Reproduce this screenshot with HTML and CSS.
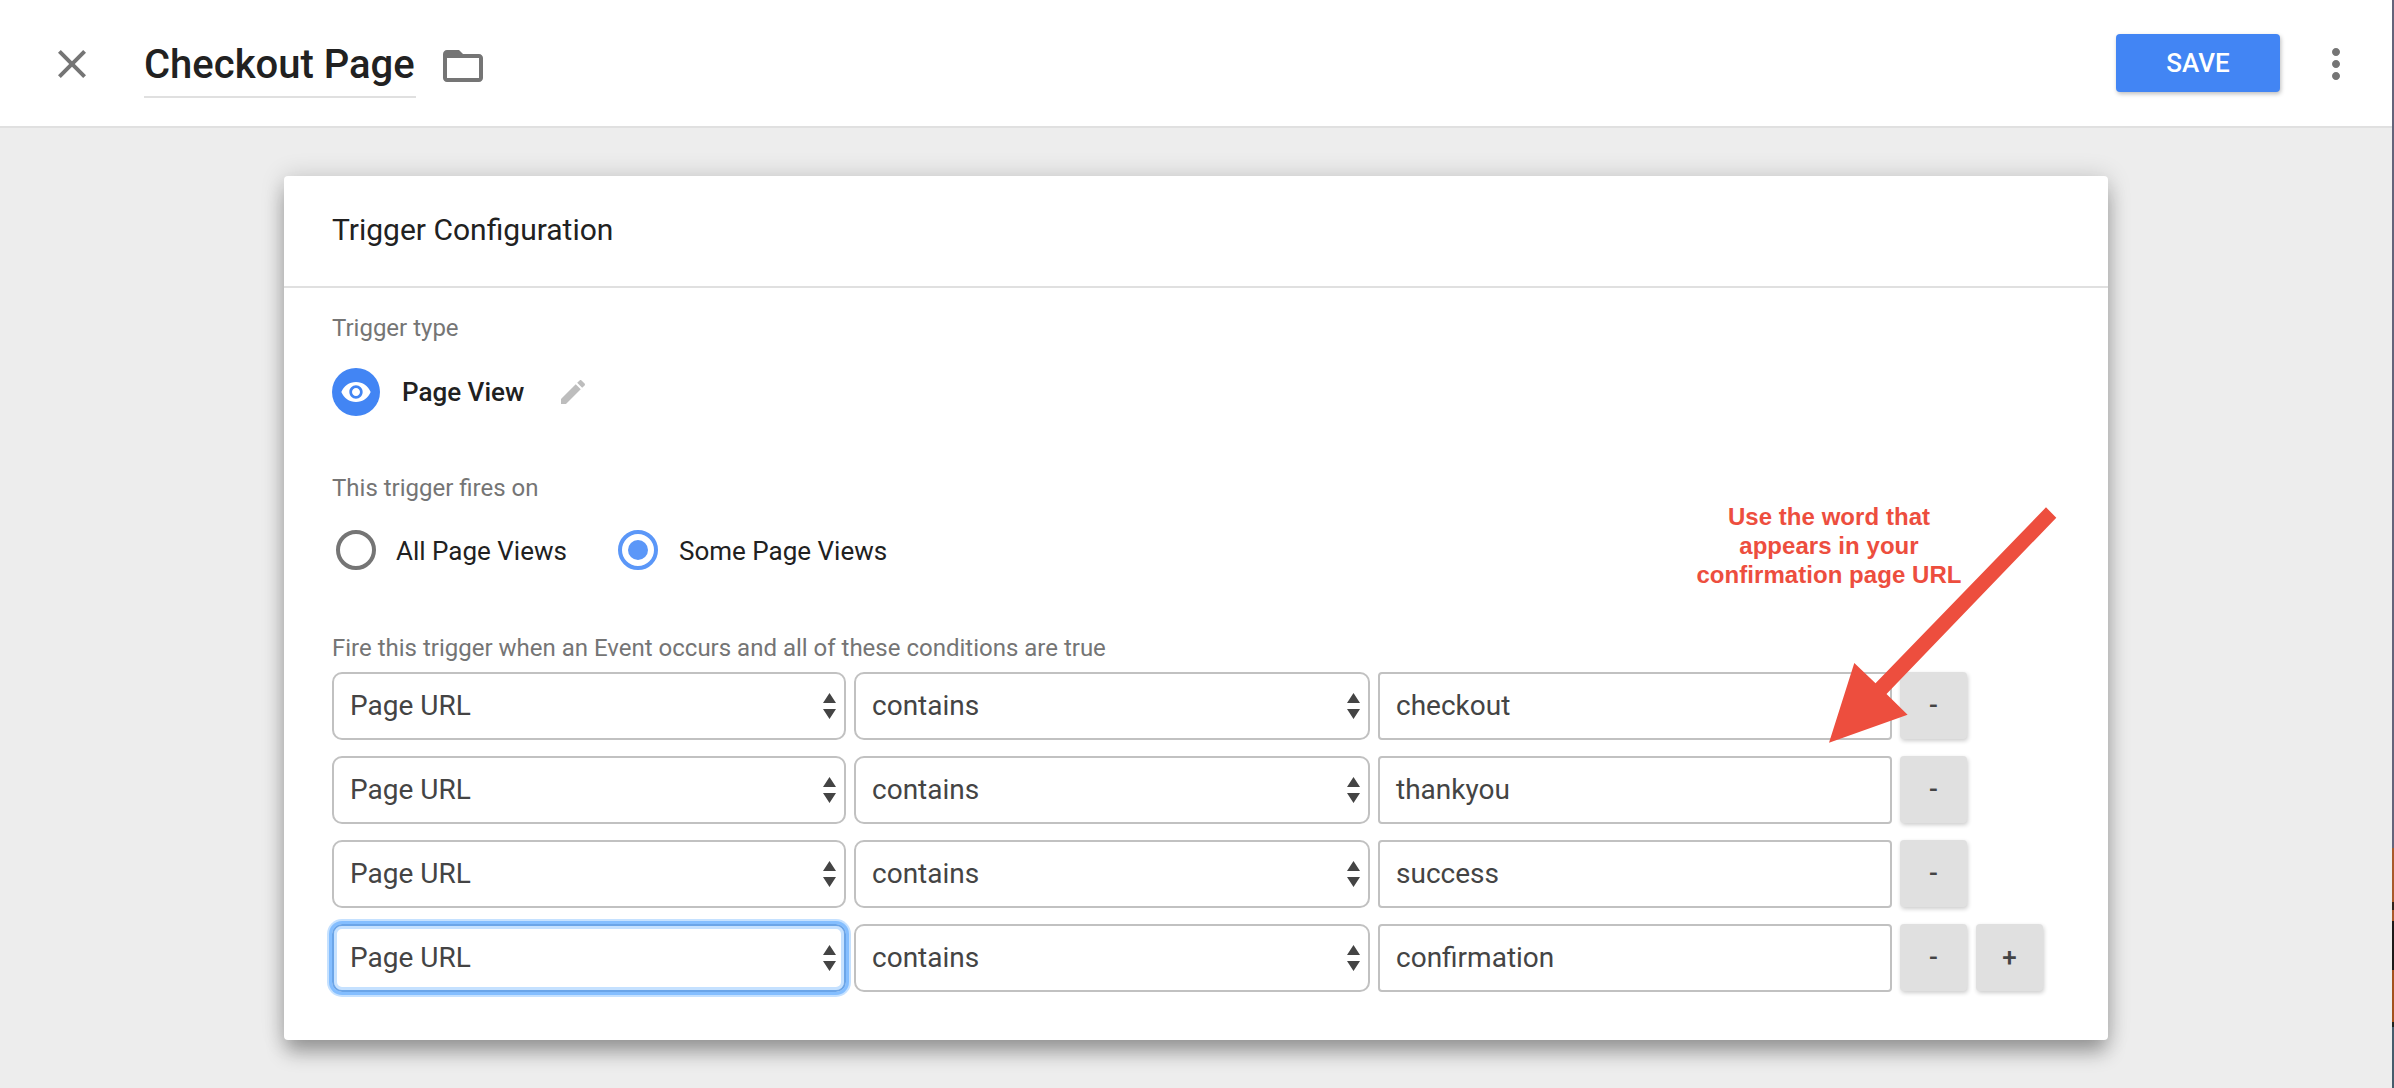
FILE: index.html
```html
<!DOCTYPE html>
<html lang="en">
<head>
<meta charset="utf-8">
<title>Checkout Page</title>
<link rel="stylesheet" href="styles.css">
</head>
<body>
<div class="screen">
  <div class="app">
    <header class="topbar">
      <svg class="icon close" viewBox="0 0 24 24"><path d="M19 6.41 17.59 5 12 10.59 6.41 5 5 6.41 10.59 12 5 17.59 6.41 19 12 13.41 17.59 19 19 17.59 13.41 12z"/></svg>
      <h1 class="title">Checkout Page</h1>
      <svg class="icon folder" viewBox="0 0 24 24"><path d="M20 6h-8l-2-2H4c-1.1 0-1.99.9-1.99 2L2 18c0 1.1.9 2 2 2h16c1.1 0 2-.9 2-2V8c0-1.1-.9-2-2-2zm0 12H4V8h16v10z"/></svg>
      <button class="save">SAVE</button>
      <svg class="icon more" viewBox="0 0 24 24"><path d="M12 8c1.1 0 2-.9 2-2s-.9-2-2-2-2 .9-2 2 .9 2 2 2zm0 2c-1.1 0-2 .9-2 2s.9 2 2 2 2-.9 2-2-.9-2-2-2zm0 6c-1.1 0-2 .9-2 2s.9 2 2 2 2-.9 2-2-.9-2-2-2z"/></svg>
    </header>
    <main class="card">
      <h2 class="card-title">Trigger Configuration</h2>
      <div class="card-body">
        <div class="label">Trigger type</div>
        <div class="type">
          <span class="type-badge"><svg viewBox="0 0 24 24"><path d="M12 4.5C7 4.5 2.73 7.61 1 12c1.73 4.39 6 7.5 11 7.5s9.27-3.11 11-7.5c-1.73-4.39-6-7.5-11-7.5zM12 17c-2.76 0-5-2.24-5-5s2.24-5 5-5 5 2.24 5 5-2.24 5-5 5zm0-8c-1.66 0-3 1.34-3 3s1.34 3 3 3 3-1.34 3-3-1.34-3-3-3z"/></svg></span>
          <span class="type-name">Page View</span>
          <svg class="pencil" viewBox="0 0 24 24"><path d="M3 17.25V21h3.75L17.81 9.94l-3.75-3.75L3 17.25zM20.71 7.04c.39-.39.39-1.02 0-1.41l-2.34-2.34c-.39-.39-1.02-.39-1.41 0l-1.83 1.83 3.75 3.75 1.83-1.83z"/></svg>
        </div>
        <div class="label fires">This trigger fires on</div>
        <div class="radios">
          <span class="radio"></span><span class="radio-text first">All Page Views</span>
          <span class="radio on"></span><span class="radio-text">Some Page Views</span>
        </div>
        <div class="label conditions-label">Fire this trigger when an Event occurs and all of these conditions are true</div>
        <div class="conditions">
          <div class="row">
            <div class="field select">Page URL<svg viewBox="0 0 13 26"><path d="M0 10 6.5 0 13 10zM0 16h13L6.5 26z"/></svg></div>
            <div class="field select">contains<svg viewBox="0 0 13 26"><path d="M0 10 6.5 0 13 10zM0 16h13L6.5 26z"/></svg></div>
            <div class="field">checkout</div>
            <button class="step">-</button>
          </div>
          <div class="row">
            <div class="field select">Page URL<svg viewBox="0 0 13 26"><path d="M0 10 6.5 0 13 10zM0 16h13L6.5 26z"/></svg></div>
            <div class="field select">contains<svg viewBox="0 0 13 26"><path d="M0 10 6.5 0 13 10zM0 16h13L6.5 26z"/></svg></div>
            <div class="field">thankyou</div>
            <button class="step">-</button>
          </div>
          <div class="row">
            <div class="field select">Page URL<svg viewBox="0 0 13 26"><path d="M0 10 6.5 0 13 10zM0 16h13L6.5 26z"/></svg></div>
            <div class="field select">contains<svg viewBox="0 0 13 26"><path d="M0 10 6.5 0 13 10zM0 16h13L6.5 26z"/></svg></div>
            <div class="field">success</div>
            <button class="step">-</button>
          </div>
          <div class="row">
            <div class="field select focused">Page URL<svg viewBox="0 0 13 26"><path d="M0 10 6.5 0 13 10zM0 16h13L6.5 26z"/></svg></div>
            <div class="field select">contains<svg viewBox="0 0 13 26"><path d="M0 10 6.5 0 13 10zM0 16h13L6.5 26z"/></svg></div>
            <div class="field">confirmation</div>
            <button class="step">-</button>
            <button class="step">+</button>
          </div>
        </div>
      </div>
      <div class="note">Use the word that<br>appears in your<br>confirmation page URL</div>
      <svg class="arrow" viewBox="0 0 228 236"><path d="M217 .3 227.3 10.7 57.5 187 78.6 207.7 0 235.7 25.3 156 46.5 176.3z"/></svg>
    </main>
  </div>
  <div class="edge"></div>
</div>
</body>
</html>
```
FILE: styles.css
```css
* { box-sizing: border-box; }
body {
  margin: 0;
  font-family: Roboto, "Liberation Sans", sans-serif;
  color: #212121;
}
.screen {
  display: flex;
  width: 2394px;
  height: 1088px;
  overflow: hidden;
  background: #ededed;
}
.app { flex: 1; }
.edge {
  width: 2px;
  background: linear-gradient(#64647a 0 848px, #a85a2c 848px 902px, #33231c 902px 910px, #a85a2c 910px 921px, #1e1a1a 921px 970px, #a3521f 970px 1022px, #1f2420 1022px 1027px, #465c6c 1027px);
}
.topbar {
  display: flex;
  align-items: flex-start;
  height: 128px;
  padding: 34px 32px 0 48px;
  background: #fff;
  border-bottom: 2px solid #e0e0e0;
}
.icon { width: 48px; height: 48px; fill: #757575; }
.close { margin-top: 6px; }
.title {
  margin: 6px 0 0 48px;
  width: 272px;
  height: 58px;
  font-size: 40px;
  line-height: 50px;
  font-weight: 500;
  white-space: nowrap;
  border-bottom: 2px solid #e0e0e0;
}
.folder { margin: 8px 0 0 23px; }
.save {
  margin-left: auto;
  width: 164px;
  height: 58px;
  padding: 0;
  border: 0;
  border-radius: 4px;
  background: #4285f4;
  box-shadow: 1px 2px 4px rgba(0, 0, 0, .26);
  color: #fff;
  font: 500 26px/58px Roboto, sans-serif;
}
.more { margin: 6px 0 0 32px; }
.card {
  position: relative;
  width: 1824px;
  height: 864px;
  margin: 48px 0 0 284px;
  background: #fff;
  border-radius: 4px;
  box-shadow: 0 14px 20px -2px rgba(0, 0, 0, .32), 0 0 24px rgba(0, 0, 0, .16);
}
.card-title {
  margin: 0;
  height: 112px;
  padding-left: 48px;
  font-size: 30px;
  line-height: 108px;
  font-weight: 400;
  border-bottom: 2px solid #e0e0e0;
}
.card-body { padding: 24px 48px 0; }
.label { font-size: 24px; line-height: 32px; color: #757575; }
.type { display: flex; align-items: center; height: 48px; margin-top: 24px; }
.type-badge {
  display: flex;
  align-items: center;
  justify-content: center;
  width: 48px;
  height: 48px;
  border-radius: 50%;
  background: #4285f4;
}
.type-badge svg { width: 32px; height: 32px; fill: #fff; }
.type-name { width: 123px; margin: 0 32px 0 22px; font-size: 26px; line-height: 46px; font-weight: 500; white-space: nowrap; }
.pencil { width: 32px; height: 32px; fill: #bdbdbd; }
.fires { margin-top: 56px; }
.radios { display: flex; align-items: center; height: 40px; margin: 26px 0 0 4px; }
.radio {
  display: flex;
  align-items: center;
  justify-content: center;
  width: 40px;
  height: 40px;
  margin-right: 20px;
  border: 4px solid #757575;
  border-radius: 50%;
}
.radio.on { margin-right: 21px; border-color: #5b97f8; }
.radio.on::after {
  content: "";
  width: 20px;
  height: 20px;
  border-radius: 50%;
  background: #5b97f8;
}
.radio-text { padding-top: 2px; font-size: 26px; line-height: 40px; white-space: nowrap; }
.radio-text.first { width: 222px; }
.conditions-label { margin-top: 62px; }
.conditions { display: grid; gap: 16px; margin-top: 8px; }
.row {
  display: grid;
  grid-template-columns: 514px 516px 514px 68px 68px;
  gap: 8px;
  height: 68px;
}
.field {
  display: flex;
  align-items: center;
  padding: 0 16px;
  border: 2px solid #c1c1c1;
  border-radius: 4px;
  font-size: 28px;
  line-height: 40px;
  color: #444;
}
.select { justify-content: space-between; padding-right: 8px; border-radius: 10px; }
.select svg { width: 13px; height: 26px; fill: #444; }
.focused {
  border-color: #6ba5e8;
  box-shadow: 0 0 0 3px #84beff, 0 0 0 5px #c5e1ff, inset 0 0 0 3px #c5e1ff;
}
.step {
  padding: 0 0 2px;
  width: 67px;
  height: 67px;
  border: 0;
  border-radius: 4px;
  background: #e0e0e0;
  box-shadow: 1px 2px 4px rgba(0, 0, 0, .2);
  color: #444;
  font: 500 26px/40px Roboto, sans-serif;
}
/* Callout laid over the form */
.note {
  position: absolute;
  left: 1395px;
  top: 326px;
  width: 300px;
  font: bold 24px/29px "Liberation Sans", Arial, sans-serif;
  letter-spacing: .05px;
  text-align: center;
  color: #ed4e3e;
}
.arrow {
  position: absolute;
  left: 1545px;
  top: 331px;
  width: 228px;
  height: 236px;
  fill: #ed4e3e;
}
```
